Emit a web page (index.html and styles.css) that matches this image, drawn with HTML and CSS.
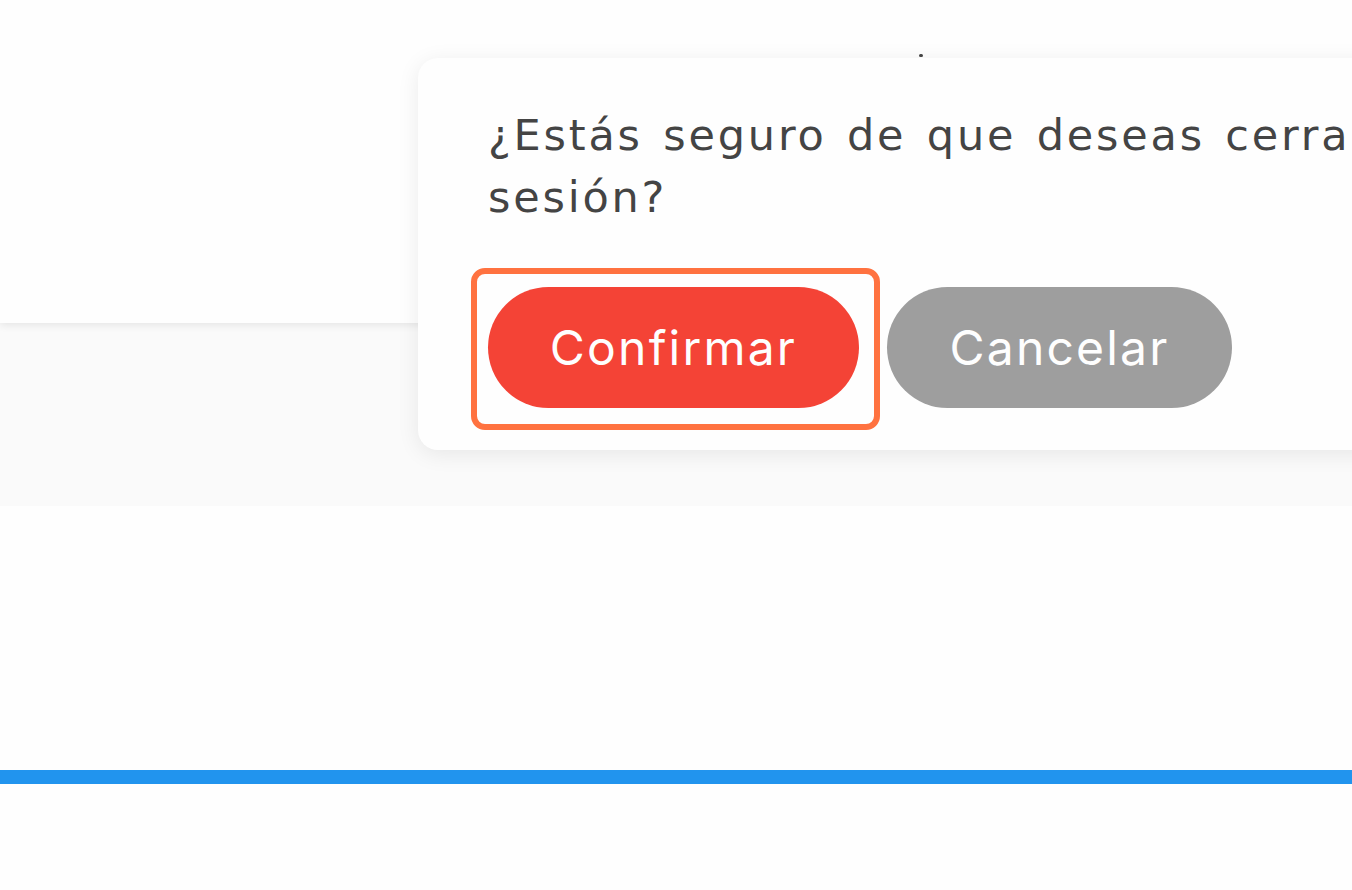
FILE: index.html
```html
<!DOCTYPE html>
<html lang="es">
<head>
<meta charset="utf-8">
<title>Cerrar sesión</title>
<link rel="stylesheet" href="styles.css">
</head>
<body>
<div class="page">
  <header class="header"></header>
  <section class="band"></section>
  <section class="content"></section>
  <div class="bar"></div>
</div>
<div class="popover" role="dialog">
  <span class="tip"></span>
  <p class="message">¿Estás seguro de que deseas cerrar sesión?</p>
  <div class="actions">
    <button class="btn btn-confirm">Confirmar</button>
    <button class="btn btn-cancel">Cancelar</button>
  </div>
</div>
</body>
</html>
```
FILE: styles.css
```css
html, body {
  margin: 0;
  padding: 0;
  background: #fefefe;
  overflow: hidden;
  width: 1352px;
  height: 890px;
}
body {
  font-family: "Inter", "Open Sans", sans-serif;
}
.page {
  display: flex;
  flex-direction: column;
}
.header {
  height: 323px;
  background: #fefefe;
  box-shadow: 0 2px 8px rgba(0, 0, 0, 0.09);
  position: relative;
  z-index: 1;
}
.band {
  height: 183px;
  background: #fafafa;
}
.content {
  height: 264px;
  background: #fefefe;
}
.bar {
  height: 14px;
  background: #2194ee;
}
.popover {
  position: absolute;
  left: 418px;
  top: 58px;
  width: 1060px;
  box-sizing: border-box;
  padding: 46px 40px 42px 70px;
  background: #fefefe;
  border-radius: 20px;
  box-shadow: 0 4px 22px rgba(0, 0, 0, 0.08);
  z-index: 2;
}
.tip {
  position: absolute;
  left: 501px;
  top: -4px;
  width: 4px;
  height: 3px;
  border-radius: 2px;
  background: #444;
}
.message {
  margin: 0;
  width: 960px;
  font-family: "DejaVu Sans", sans-serif;
  font-size: 43px;
  line-height: 62px;
  color: #444;
  letter-spacing: 2.8px;
  word-spacing: 4px;
}
.actions {
  display: flex;
  gap: 28px;
  margin-top: 59px;
}
.btn {
  position: relative;
  height: 121px;
  padding: 0;
  border: none;
  border-radius: 61px;
  font-family: inherit;
  font-size: 48px;
  color: #fefefe;
  letter-spacing: 2.2px;
}
.btn-confirm {
  background: #f44336;
  width: 371px;
}
.btn-confirm::after {
  content: "";
  position: absolute;
  left: -17px;
  top: -19px;
  right: -21px;
  bottom: -22px;
  border: 6px solid #ff7240;
  border-radius: 14px;
}
.btn-cancel {
  background: #9e9e9e;
  width: 345px;
}
```
